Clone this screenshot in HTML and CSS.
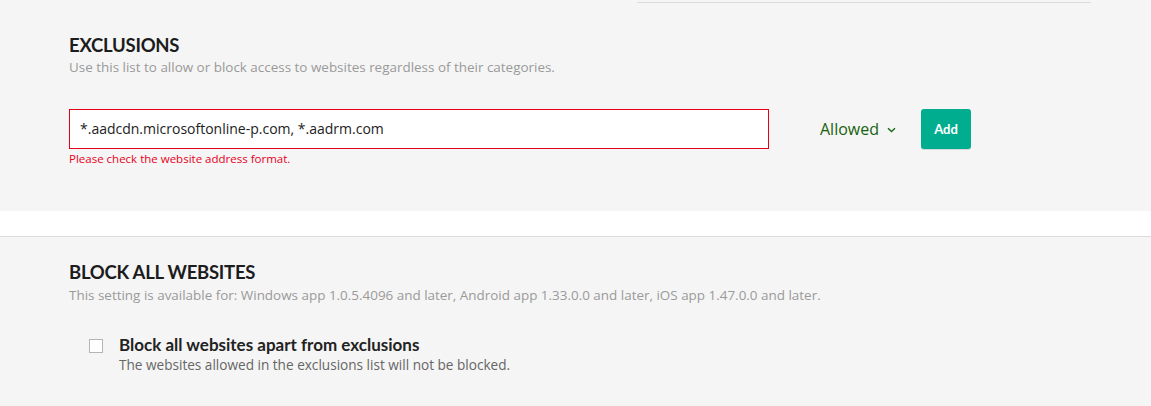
FILE: index.html
```html
<!DOCTYPE html>
<html>
<head>
<meta charset="utf-8">
<link rel="stylesheet" href="styles.css">
</head>
<body>
<div class="top"><div class="topline"></div></div>
<section class="sec sec-excl">
  <h2 class="title">EXCLUSIONS</h2>
  <p class="sub">Use this list to allow or block access to websites regardless of their categories.</p>
  <div class="row">
    <div class="field">
      <div class="input">*.aadcdn.microsoftonline-p.com, *.aadrm.com</div>
      <div class="error">Please check the website address format.</div>
    </div>
    <div class="select">Allowed
      <svg class="chev" width="9" height="6" viewBox="0 0 9 6"><path d="M1 1.2 L4.5 4.6 L8 1.2" fill="none" stroke="#1a6b14" stroke-width="1.4"/></svg>
    </div>
    <button class="btn">Add</button>
  </div>
</section>
<div class="band"></div>
<section class="sec sec-block">
  <h2 class="title">BLOCK ALL WEBSITES</h2>
  <p class="sub">This setting is available for: Windows app 1.0.5.4096 and later, Android app 1.33.0.0 and later, iOS app 1.47.0.0 and later.</p>
  <div class="check">
    <span class="box"></span>
    <div class="check-text">
      <div class="check-label">Block all websites apart from exclusions</div>
      <div class="check-desc">The websites allowed in the exclusions list will not be blocked.</div>
    </div>
  </div>
</section>
</body>
</html>
```
FILE: styles.css
```css
* { box-sizing: border-box; }
html, body { margin: 0; padding: 0; }
body {
  background: #f5f5f5;
  font-family: "Open Sans", Lato, Arial, sans-serif;
  color: #222;
  width: 1151px;
  height: 406px;
  overflow: hidden;
}
.top { padding-top: 2px; height: 2px; }
.topline { margin-left: 637px; width: 454px; border-top: 1px solid #dcdcdc; }
.sec { padding-left: 69px; }
.sec-excl { padding-top: 31px; height: 209px; }
.title {
  margin: 0;
  font-family: Lato, "Open Sans", Arial, sans-serif;
  font-size: 18.5px;
  line-height: 24px;
  font-weight: 700;
  color: #1c1c1c;
  letter-spacing: -0.25px;
}
.sub {
  margin: 1px 0 0;
  font-size: 13.45px;
  line-height: 18px;
  color: #9a9a9a;
}
.row { display: flex; align-items: flex-start; margin-top: 33px; }
.field { width: 700px; }
.input {
  height: 40px;
  border: 1px solid #e4001b;
  background: #fff;
  padding: 0 10px;
  font-size: 14px;
  line-height: 38px;
  color: #222;
  font-weight: 500;
}
.error {
  margin-top: 3px;
  font-size: 11.5px;
  line-height: 14px;
  color: #e8001c;
}
.select {
  margin-left: 51px;
  width: 77px;
  height: 40px;
  display: flex;
  align-items: center;
  font-size: 16px;
  color: #17620f;
  font-weight: 500;
}
.chev { margin-left: 8px; margin-top: 2px; }
.btn {
  margin-left: 24px;
  width: 50px;
  height: 40px;
  border: 0;
  border-radius: 3px;
  background: #00ae8f;
  color: #fff;
  font-family: Lato, "Open Sans", Arial, sans-serif;
  font-size: 13px;
  font-weight: 700;
  box-shadow: 0 1px 0 rgba(0,0,0,0.12);
  padding: 0;
}
.band { height: 26px; background: #fff; border-bottom: 1px solid #dcdcdc; }
.sec-block { padding-top: 23px; }
.sec-block .sub { margin-top: 2px; }
.check { display: flex; align-items: flex-start; margin-top: 31px; padding-left: 20px; }
.box {
  width: 14px; height: 14px;
  border: 1px solid #b5b5b5;
  background: #fff;
  margin-top: 4px;
  flex: none;
}
.check-text { margin-left: 16px; }
.check-label { font-family: Lato, "Open Sans", Arial, sans-serif; font-size: 17px; line-height: 20px; font-weight: 700; color: #222; }
.check-desc { margin-top: 1px; font-size: 13.6px; line-height: 18px; color: #666; }
```
